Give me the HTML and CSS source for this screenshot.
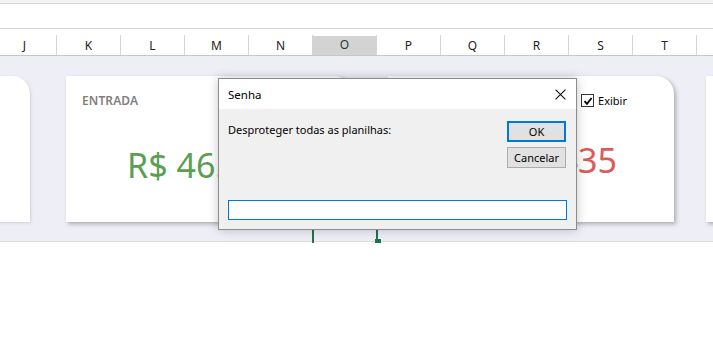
FILE: index.html
```html
<!DOCTYPE html>
<html lang="pt-BR">
<head>
<meta charset="utf-8">
<title>Senha</title>
<link rel="stylesheet" href="styles.css">
</head>
<body>
<div class="sheet">
  <div class="ribbon-edge"></div>
  <div class="formula"></div>
  <div class="colheader">
    <div class="col first">J</div>
    <div class="col">K</div>
    <div class="col">L</div>
    <div class="col">M</div>
    <div class="col">N</div>
    <div class="col selected">O</div>
    <div class="col">P</div>
    <div class="col">Q</div>
    <div class="col">R</div>
    <div class="col">S</div>
    <div class="col">T</div>
    <div class="col"></div>
  </div>
  <div class="dash">
    <div class="cards">
      <div class="card card-left"></div>
      <div class="card">
        <div class="label">ENTRADA</div>
        <div class="value value-in">R$ 46.120,00</div>
      </div>
      <div class="card">
        <div class="card-top">
          <div class="label">SAÍDA</div>
          <label class="check"><span class="box"><svg viewBox="0 0 10 10" width="10" height="10"><path d="M1.5 5.2 L4 7.8 L8.6 2" fill="none" stroke="#000" stroke-width="1.8"/></svg></span>Exibir</label>
        </div>
        <div class="value value-out">R$ 12.435</div>
      </div>
      <div class="card card-right"></div>
    </div>
  </div>
  <div class="below"></div>

  <div class="selection"><span class="handle"></span></div>

  <div class="dialog">
    <div class="titlebar">
      <span class="title">Senha</span>
      <svg class="close" viewBox="0 0 10 10" width="11" height="11"><path d="M0.5 0.5 L9.5 9.5 M9.5 0.5 L0.5 9.5" stroke="#111" stroke-width="1"/></svg>
    </div>
    <div class="dbody">
      <div class="drow">
        <div class="prompt">Desproteger todas as planilhas:</div>
        <div class="buttons">
          <button class="btn btn-ok">OK</button>
          <button class="btn">Cancelar</button>
        </div>
      </div>
      <div class="input"></div>
    </div>
  </div>
</div>
</body>
</html>
```

FILE: styles.css
```css
html, body {
  margin: 0;
  padding: 0;
  background: #ffffff;
}
body {
  font-family: "Noto Sans", "Open Sans", sans-serif;
  width: 713px;
  height: 342px;
  overflow: hidden;
}
.sheet {
  position: relative;
  width: 713px;
  height: 342px;
  overflow: hidden;
}
.ribbon-edge {
  height: 3px;
  background: #f3f3f3;
  border-bottom: 1px solid #d6d6d6;
}
.formula {
  height: 24px;
  background: #ffffff;
  border-bottom: 1px solid #d4d4d4;
}
.colheader {
  display: flex;
  height: 26px;
  background: #ffffff;
  border-bottom: 1px solid #c6c6c6;
  margin-left: -7px;
  font-size: 12px;
  color: #222;
}
.col {
  flex: 0 0 64px;
  display: flex;
  align-items: center;
  justify-content: center;
  box-sizing: border-box;
  border-right: 1px solid #d4d4d4;
  border-image: linear-gradient(to bottom, transparent 7px, #d4d4d4 7px) 1;
  padding-top: 6px;
}
.col.selected {
  background: linear-gradient(to bottom, #ffffff 7px, #d3d3d3 7px);
  border-bottom: 2px solid #217346;
  color: #2a3a30;
}
.dash {
  height: 186px;
  background: #eeeef7;
  border-bottom: 1px solid #dcdce6;
  padding-top: 20px;
  box-sizing: border-box;
}
.cards {
  display: flex;
  gap: 36px;
  margin-left: -230px;
}
.card {
  flex: 0 0 286px;
  height: 146px;
  background: #ffffff;
  border-top-right-radius: 18px;
  box-shadow: 2px 2px 4px rgba(0, 0, 0, 0.28);
  box-sizing: border-box;
  padding: 16px 16px 0 16px;
}
.card-left {
  flex-basis: 260px;
  box-shadow: 1px 1px 3px rgba(0, 0, 0, 0.12);
}
.card-right {
  margin-left: -4px;
}
.card-top {
  display: flex;
  justify-content: space-between;
  align-items: flex-start;
}
.label {
  font-size: 12px;
  font-weight: 600;
  color: #7f7f7f;
  letter-spacing: 0.1px;
}
.check {
  display: flex;
  align-items: center;
  gap: 4px;
  font-size: 11px;
  color: #000;
  margin-right: 31px;
  margin-top: 1px;
}
.box {
  width: 11px;
  height: 11px;
  border: 1px solid #333;
  background: #fff;
  display: flex;
  align-items: center;
  justify-content: center;
}
.value {
  font-size: 34px;
  line-height: 40px;
  margin-top: 36px;
  white-space: nowrap;
}
.value-in {
  color: #5b9f51;
  padding-left: 45px;
}
.value-out {
  color: #dd5a5a;
  text-align: right;
  padding-right: 41px;
  margin-top: 31px;
}
.below {
  height: 100px;
  background: #fff;
}
.selection {
  position: absolute;
  left: 312px;
  top: 200px;
  width: 62px;
  height: 43px;
  border-left: 2px solid #217346;
  border-right: 2px solid #217346;
}
.handle {
  position: absolute;
  right: -5px;
  bottom: 0;
  width: 6px;
  height: 4px;
  background: #217346;
}
.dialog {
  position: absolute;
  left: 218px;
  top: 78px;
  width: 359px;
  height: 152px;
  box-sizing: border-box;
  border: 1px solid #8c8c8c;
  background: #f0f0f0;
  box-shadow: 0 0 10px rgba(0, 0, 0, 0.22);
  display: flex;
  flex-direction: column;
  font-size: 11px;
  color: #000;
}
.titlebar {
  height: 30px;
  background: #ffffff;
  display: flex;
  align-items: center;
  justify-content: space-between;
  padding: 0 10px 0 9px;
  flex: 0 0 auto;
}
.title {
  font-size: 11.5px;
}
.dbody {
  flex: 1;
  display: flex;
  flex-direction: column;
  justify-content: space-between;
  padding: 11px 9px 9px 9px;
}
.drow {
  display: flex;
  justify-content: space-between;
  align-items: flex-start;
}
.prompt {
  padding-top: 2px;
}
.buttons {
  display: flex;
  flex-direction: column;
  gap: 5px;
  padding-top: 1px;
  margin-right: 1px;
}
.btn {
  width: 59px;
  height: 21px;
  box-sizing: border-box;
  border: 1px solid #adadad;
  background: #e1e1e1;
  font-family: inherit;
  font-size: 11px;
  color: #000;
  padding: 0;
}
.btn-ok {
  border: 2px solid #0078d7;
}
.input {
  height: 20px;
  box-sizing: border-box;
  border: 1px solid #0078d7;
  background: #ffffff;
}
```
